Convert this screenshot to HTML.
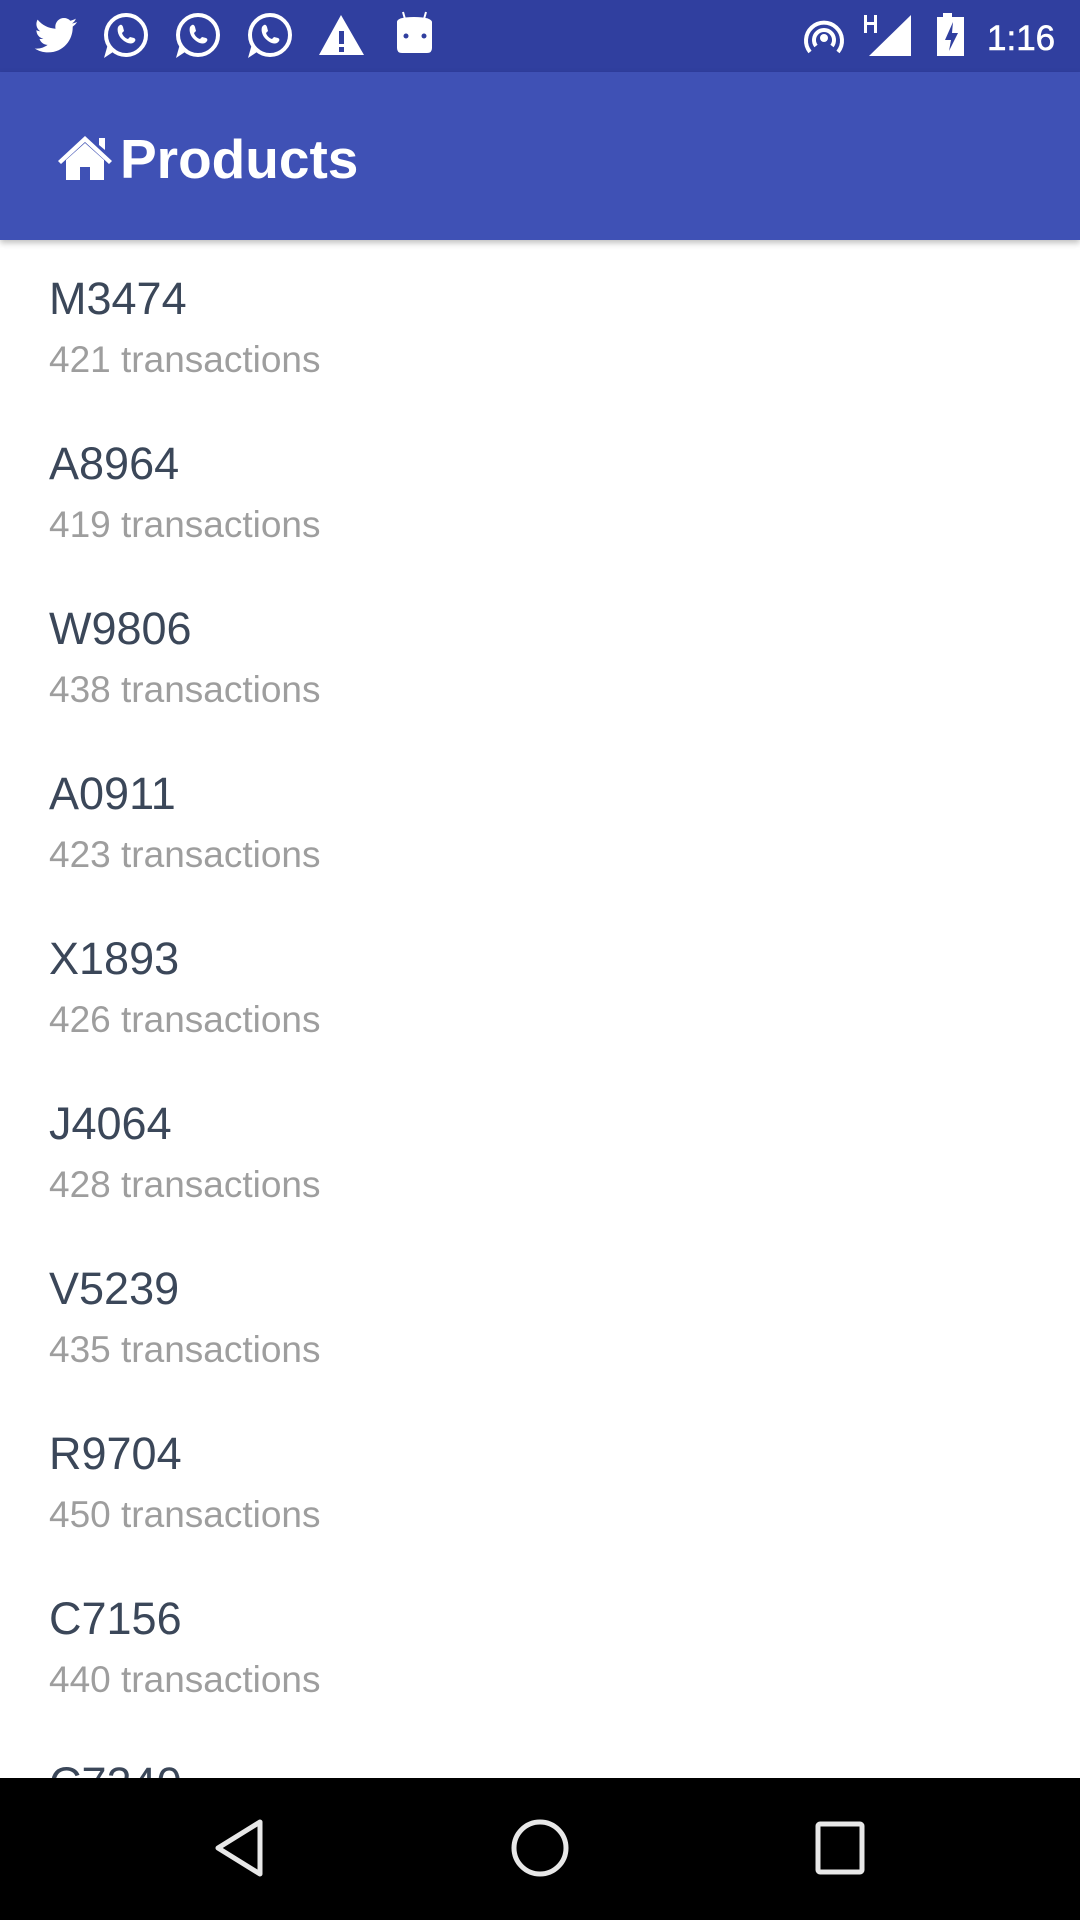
<!DOCTYPE html>
<html><head><meta charset="utf-8"><style>
*{margin:0;padding:0;box-sizing:border-box}
body{width:1080px;height:1920px;overflow:hidden;background:#fff;font-family:"Liberation Sans",sans-serif;position:relative}
#sb{position:absolute;left:0;top:0;width:1080px;height:72px;background:#303f9f}
#ab{position:absolute;left:0;top:72px;width:1080px;height:168px;background:#3f51b5;box-shadow:0 3px 6px rgba(0,0,0,.25);z-index:2}
.t{position:absolute;left:49px;font-size:45px;color:#3b4759;line-height:1}
.s{position:absolute;left:49px;font-size:37px;color:#9e9e9e;line-height:1}
#nav{position:absolute;left:0;top:1778px;width:1080px;height:142px;background:#000;z-index:3}
</style></head><body>
<div id="sb">
<svg width="1080" height="72" style="position:absolute;left:0;top:0">
<g fill="#fff">
<path d="M77 22c-1.6.7-3.3 1.2-5 1.4 1.8-1.1 3.2-2.8 3.8-4.8-1.7 1-3.6 1.7-5.5 2.1-1.6-1.7-3.9-2.7-6.3-2.7-4.8 0-8.7 3.9-8.7 8.7 0 .7.1 1.4.2 2-7.2-.4-13.6-3.8-17.9-9.1-.7 1.3-1.2 2.8-1.2 4.4 0 3 1.5 5.7 3.9 7.2-1.4 0-2.8-.4-3.9-1.1v.1c0 4.2 3 7.7 7 8.5-.7.2-1.5.3-2.3.3-.6 0-1.1 0-1.6-.1 1.1 3.4 4.3 6 8.1 6-3 2.3-6.7 3.7-10.8 3.7-.7 0-1.4 0-2.1-.1 3.9 2.5 8.4 3.9 13.3 3.9 16 0 24.7-13.2 24.7-24.7v-1.1c1.7-1.2 3.2-2.7 4.3-4.5z"/>
</g>
<g fill="none" stroke="#fff" stroke-width="4">
<circle cx="126" cy="35" r="20"/><circle cx="198" cy="35" r="20"/><circle cx="270" cy="35" r="20"/>
</g>
<g fill="#fff">
<path d="M104 58l4-14 8 6z"/><path d="M176 58l4-14 8 6z"/><path d="M248 58l4-14 8 6z"/>
<path d="M118 27c2-3 4-3 5 0l1 4-2 2c1 3 3 5 6 6l2-2 4 1c2 1 2 3-1 5-4 2-10-2-13-6-2-3-3-7-2-10z"/>
<path d="M190 27c2-3 4-3 5 0l1 4-2 2c1 3 3 5 6 6l2-2 4 1c2 1 2 3-1 5-4 2-10-2-13-6-2-3-3-7-2-10z"/>
<path d="M262 27c2-3 4-3 5 0l1 4-2 2c1 3 3 5 6 6l2-2 4 1c2 1 2 3-1 5-4 2-10-2-13-6-2-3-3-7-2-10z"/>
<path d="M341 15l23 40h-45z"/>
<path d="M397 22q0-5 17-5t18 5v26q0 5-5 5h-25q-5 0-5-5z"/>
<path d="M864 15h3v7h7v-7h3v18h-3v-8h-7v8h-3z"/>
<path d="M911 15v41h-42z"/>
<path d="M943 13h9v4h12v39h-27v-39h6z"/>
</g>
<g fill="#303f9f"><rect x="339" y="31" width="5" height="13"/><rect x="339" y="47" width="5" height="5"/><circle cx="406" cy="36" r="2.5"/><circle cx="424" cy="36" r="2.5"/><path d="M953 22l-8 18h6l-2 11 9-18h-6z"/></g>
<g stroke="#fff" stroke-width="2"><path d="M405 19l-2-7M424 19l2-7"/></g>
<g fill="none" stroke="#fff" stroke-width="4"><path d="M810 52a18 18 0 1 1 28 0"/><path d="M816 46a10 10 0 1 1 16 0"/></g>
<circle cx="824" cy="38" r="4" fill="#fff"/>
<text x="987" y="50" fill="#fff" font-family="Liberation Sans" font-size="35" stroke="#fff" stroke-width="0.6">1:16</text>
</svg>
</div>
<div id="ab">
<svg width="60" height="50" style="position:absolute;left:55px;top:60px" viewBox="0 0 60 50">
<path fill="#fff" d="M30 4l27 25-3 3-24-22-24 22-3-3z"/><path fill="#fff" d="M44 6h6v12l-6-5z"/><path fill="#fff" d="M11 28l19-17 19 17v20h-14v-13h-10v13h-14z"/>
</svg>
<div style="position:absolute;left:120px;top:60px;font-size:55px;color:#fff;font-weight:bold;line-height:1">Products</div>
</div>
<div class="t" style="top:276px">M3474</div><div class="s" style="top:341px">421 transactions</div>
<div class="t" style="top:441px">A8964</div><div class="s" style="top:506px">419 transactions</div>
<div class="t" style="top:606px">W9806</div><div class="s" style="top:671px">438 transactions</div>
<div class="t" style="top:771px">A0911</div><div class="s" style="top:836px">423 transactions</div>
<div class="t" style="top:936px">X1893</div><div class="s" style="top:1001px">426 transactions</div>
<div class="t" style="top:1101px">J4064</div><div class="s" style="top:1166px">428 transactions</div>
<div class="t" style="top:1266px">V5239</div><div class="s" style="top:1331px">435 transactions</div>
<div class="t" style="top:1431px">R9704</div><div class="s" style="top:1496px">450 transactions</div>
<div class="t" style="top:1596px">C7156</div><div class="s" style="top:1661px">440 transactions</div>
<div class="t" style="top:1761px">C7240</div>
<div id="nav">
<svg width="1080" height="142">
<g fill="none" stroke="#e8e8e8" stroke-width="5" stroke-linejoin="round">
<path d="M260 44v52l-42-26z"/>
<circle cx="540" cy="70" r="26"/>
<rect x="818" y="46" width="44" height="48" rx="2"/>
</g>
</svg>
</div>
</body></html>
